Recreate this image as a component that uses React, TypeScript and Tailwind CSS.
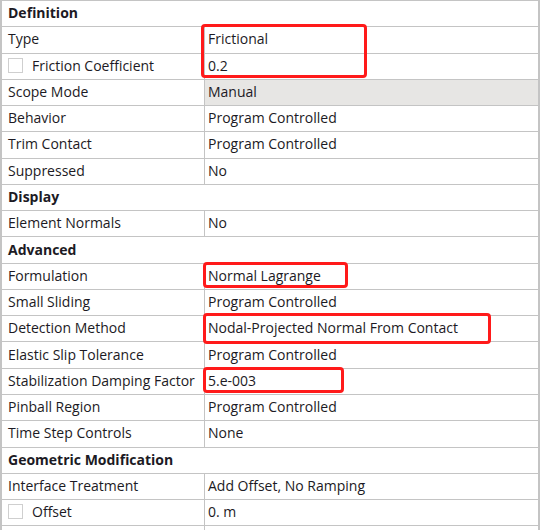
type Row =
  | { kind: 'header'; label: string }
  | { kind: 'prop'; label: string; value: string; check?: boolean; shaded?: boolean };

const rows: Row[] = [
  { kind: 'header', label: 'Definition' },
  { kind: 'prop', label: 'Type', value: 'Frictional' },
  { kind: 'prop', label: 'Friction Coefficient', value: '0.2', check: true },
  { kind: 'prop', label: 'Scope Mode', value: 'Manual', shaded: true },
  { kind: 'prop', label: 'Behavior', value: 'Program Controlled' },
  { kind: 'prop', label: 'Trim Contact', value: 'Program Controlled' },
  { kind: 'prop', label: 'Suppressed', value: 'No' },
  { kind: 'header', label: 'Display' },
  { kind: 'prop', label: 'Element Normals', value: 'No' },
  { kind: 'header', label: 'Advanced' },
  { kind: 'prop', label: 'Formulation', value: 'Normal Lagrange' },
  { kind: 'prop', label: 'Small Sliding', value: 'Program Controlled' },
  { kind: 'prop', label: 'Detection Method', value: 'Nodal-Projected Normal From Contact' },
  { kind: 'prop', label: 'Elastic Slip Tolerance', value: 'Program Controlled' },
  { kind: 'prop', label: 'Stabilization Damping Factor', value: '5.e-003' },
  { kind: 'prop', label: 'Pinball Region', value: 'Program Controlled' },
  { kind: 'prop', label: 'Time Step Controls', value: 'None' },
  { kind: 'header', label: 'Geometric Modification' },
  { kind: 'prop', label: 'Interface Treatment', value: 'Add Offset, No Ramping' },
  { kind: 'prop', label: 'Offset', value: '0. m', check: true },
  { kind: 'prop', label: '', value: '' },
];

// red annotation boxes drawn over the grid
function Highlight({ className }: { className: string }) {
  return <div className={`absolute border-[3px] border-[#ff1a1a] rounded-[4px] pointer-events-none ${className}`} />;
}

export default function App() {
  return (
    <div className="w-[541px] h-[530px] overflow-hidden bg-white font-['Open_Sans',sans-serif] text-[14px] text-[#1c1a24]">
      <div className="relative w-[540px] border-l-2 border-r-2 border-t border-[#c4c4c4]">
        {rows.map((r, i) =>
          r.kind === 'header' ? (
            <div key={i} className="h-[26.28px] border-b-[1.5px] border-[#c4c4c4] flex items-center pl-[6px] pb-[2px] font-bold">
              {r.label}
            </div>
          ) : (
            <div key={i} className="h-[26.28px] border-b-[1.5px] border-[#c4c4c4] flex">
              <div className="w-[203px] shrink-0 border-r-[1.5px] border-[#c4c4c4] flex items-center pl-[6px] pb-[2px]">
                {r.check && <span className="w-[15px] h-[15px] border border-[#cfcfcf] bg-white mr-[9px]" />}
                {r.label}
              </div>
              <div className={`flex-1 flex items-center pl-[3px] pb-[2px] ${r.shaded ? 'bg-[#e7e6e4]' : ''}`}>{r.value}</div>
            </div>
          )
        )}
        <Highlight className="left-[199px] top-[23px] w-[166px] h-[54px]" />
        <Highlight className="left-[201px] top-[261px] w-[145px] h-[26px]" />
        <Highlight className="left-[201px] top-[312px] w-[288px] h-[31px]" />
        <Highlight className="left-[201px] top-[366px] w-[141px] h-[26px]" />
      </div>
    </div>
  );
}
